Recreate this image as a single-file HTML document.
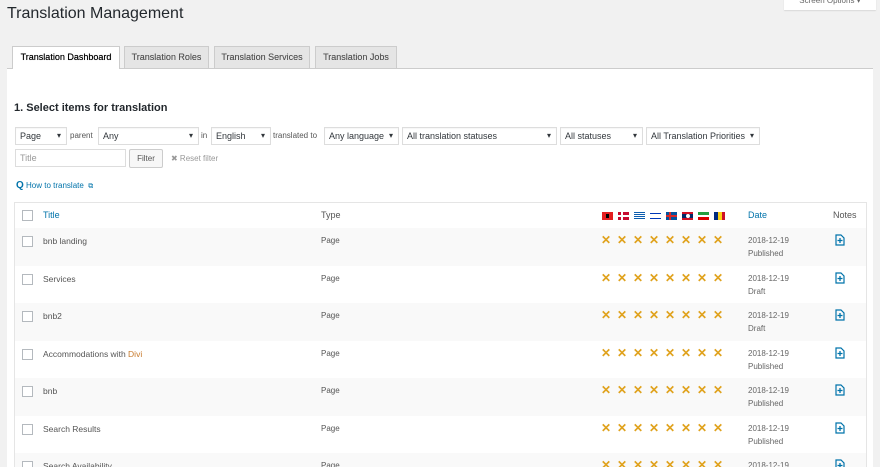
<!DOCTYPE html>
<html style="overflow:hidden;width:880px;height:467px"><head><meta charset="utf-8"><style>
*{box-sizing:border-box;margin:0;padding:0}
body{width:880px;height:467px;overflow:hidden;background:#f1f1f1;font-family:"Liberation Sans",sans-serif;color:#444;position:relative;font-size:9px}
.a{position:absolute;white-space:nowrap}
h1{position:absolute;left:7px;top:5px;font-size:16px;font-weight:400;color:#23282d}
.so{position:absolute;left:784px;top:-6px;width:92px;height:16px;background:#fff;box-shadow:0 1px 1px rgba(0,0,0,.1);font-size:8px;color:#666;text-align:center;line-height:14px}
.tab{position:absolute;top:46px;height:22px;background:#e5e5e5;border:1px solid #ccc;border-bottom:none;font-size:9px;color:#555;line-height:21px;text-align:center;text-shadow:0 0 0.3px #555}
.tab.on{background:#fff;color:#000;height:23px;z-index:2;text-shadow:0 0 0.4px #000}
.panel{position:absolute;left:7px;top:68px;width:866px;height:399px;background:#fff;border-top:1px solid #ccc}
.sel{position:absolute;top:127px;height:18px;border:1px solid #ddd;background:#fff;font-size:9px;color:#32373c;line-height:16px;padding-left:4px;box-shadow:inset 0 1px 1px rgba(0,0,0,.04)}
.sel:after{content:"▾";position:absolute;right:5px;top:0;font-size:8px}
.lbl{position:absolute;top:131px;font-size:8px;color:#555}
.tbl{position:absolute;left:14px;top:202px;width:853px;height:265px;border:1px solid #e5e5e5;border-bottom:none;background:#fff}
.row{position:absolute;left:0;width:851px;height:38px;overflow:hidden}
.cb{position:absolute;left:7px;width:11px;height:11px;border:1px solid #b4b9be;background:#fff}
.flag{position:absolute;top:9px;width:11px;height:8px}
.x{position:absolute;color:#e0a21d;font-size:12px;font-weight:bold;top:5px}
</style></head><body>
<h1>Translation Management</h1>
<div class="so">Screen Options ▾</div>
<div class="tab on" style="left:12px;width:108px">Translation Dashboard</div>
<div class="tab" style="left:124px;width:85px">Translation Roles</div>
<div class="tab" style="left:214px;width:96px">Translation Services</div>
<div class="tab" style="left:315px;width:82px">Translation Jobs</div>
<div class="panel"></div>
<div class="a" style="left:14px;top:102px;font-size:11px;font-weight:bold;color:#23282d">1. Select items for translation</div>
<div class="sel" style="left:15px;width:52px">Page</div>
<div class="lbl" style="left:70px">parent</div>
<div class="sel" style="left:98px;width:101px">Any</div>
<div class="lbl" style="left:201px">in</div>
<div class="sel" style="left:211px;width:60px">English</div>
<div class="lbl" style="left:273px">translated to</div>
<div class="sel" style="left:324px;width:75px">Any language</div>
<div class="sel" style="left:402px;width:155px">All translation statuses</div>
<div class="sel" style="left:560px;width:83px">All statuses</div>
<div class="sel" style="left:646px;width:114px">All Translation Priorities</div>
<div class="a" style="left:15px;top:149px;width:111px;height:18px;border:1px solid #ddd;background:#fff;font-size:9px;line-height:16px;padding-left:4px;color:#999">Title</div>
<div class="a" style="left:129px;top:149px;width:34px;height:19px;border:1px solid #ccc;background:#f7f7f7;border-radius:2px;font-size:8px;line-height:17px;text-align:center;color:#555">Filter</div>
<div class="a" style="left:171px;top:154px;font-size:8px;color:#999">✖ Reset filter</div>
<div class="a" style="left:16px;top:180px;font-size:8px;color:#0073aa"><b style="font-size:10px">Q</b> How to translate &nbsp;<span style="font-size:7px">⧉</span></div>
<div class="tbl">
<div class="row" style="top:0;height:26px;border-bottom:1px solid #e1e1e1">
<div class="cb" style="top:7px"></div>
<div class="a" style="left:28px;top:7px;color:#0073aa">Title</div>
<div class="a" style="left:306px;top:7px;color:#555">Type</div>
<div class="flag" style="left:587px;background:#e41e20"><i style="position:absolute;left:4px;top:2px;width:3px;height:4px;background:#000"></i></div>
<div class="flag" style="left:603px;background:linear-gradient(90deg,transparent 3px,#fff 3px,#fff 5px,transparent 5px),linear-gradient(transparent 3px,#fff 3px,#fff 5px,transparent 5px),#c60c30"></div>
<div class="flag" style="left:619px;background:repeating-linear-gradient(#0d5eaf 0 1px,#fff 1px 2px)"></div>
<div class="flag" style="left:635px;background:linear-gradient(#fff 1px,#0038b8 1px,#0038b8 2px,#fff 2px,#fff 6px,#0038b8 6px,#0038b8 7px,#fff 7px)"></div>
<div class="flag" style="left:651px;background:linear-gradient(90deg,transparent 3px,#d72828 3px,#d72828 5px,transparent 5px),linear-gradient(transparent 3px,#d72828 3px,#d72828 5px,transparent 5px),#02529c"></div>
<div class="flag" style="left:667px;background:linear-gradient(#ce1126 2px,#002868 2px,#002868 6px,#ce1126 6px)"><i style="position:absolute;left:4px;top:2px;width:4px;height:4px;border-radius:50%;background:#fff"></i></div>
<div class="flag" style="left:683px;background:linear-gradient(#239f40 3px,#fff 3px,#fff 5px,#da0000 5px)"></div>
<div class="flag" style="left:699px;background:linear-gradient(90deg,#002b7f 4px,#fcd116 4px,#fcd116 8px,#ce1126 8px)"></div>
<div class="a" style="left:733px;top:7px;color:#0073aa">Date</div>
<div class="a" style="left:818px;top:7px;color:#555">Notes</div>
</div>
</div>
<div id="rows"></div>
<script>
var d=[["bnb landing","Published"],["Services","Draft"],["bnb2","Draft"],["Accommodations with <span style='color:#c77a2c'>Divi</span>","Published"],["bnb","Published"],["Search Results","Published"],["Search Availability",""]];
var tops=[228,266,303,341,378,416,453],h="";
d.forEach(function(r,i){
var xs="";for(var k=0;k<8;k++)xs+='<div class="x" style="left:'+(586+16*k)+'px">✕</div>';
var last=i==6;
h+='<div class="row" style="left:15px;top:'+tops[i]+'px;'+(last?'height:14px;':'')+'background:'+(i%2?'#fff':'#f9f9f9')+'">'+
'<div class="cb" style="top:8px"></div>'+
'<div class="a" style="left:28px;top:8px;color:#555;font-size:8.5px">'+r[0]+'</div>'+
'<div class="a" style="left:306px;top:8px;color:#555;font-size:8px">Page</div>'+xs+
'<div class="a" style="left:733px;top:6px;color:#666;font-size:8px;line-height:13px">2018-12-19'+(last?'':'<br>'+r[1])+'</div>'+
'<svg class="a" style="left:819px;top:6px" width="12" height="12" viewBox="0 0 12 12"><path d="M2 1h5l3 3v7H2z" fill="none" stroke="#0073aa" stroke-width="1.2"/><path d="M6 4v5M3.5 6.5h5" stroke="#0073aa" stroke-width="1.3"/></svg></div>';
});
document.getElementById("rows").innerHTML=h;
</script>
</body></html>
